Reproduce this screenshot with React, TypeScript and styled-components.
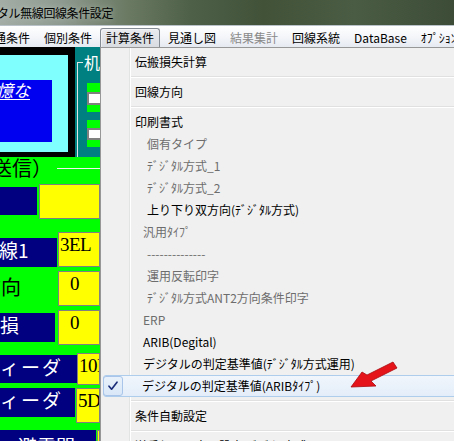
import React from "react";
import styled, { createGlobalStyle } from "styled-components";

const JP = `"Noto Sans CJK JP", "Noto Sans", sans-serif`;
const MIN = `"Liberation Serif", "Noto Sans CJK JP", serif`;

const GlobalStyle = createGlobalStyle`
  html, body { margin: 0; padding: 0; width: 454px; height: 441px; overflow: hidden; background: #f0f0f0; }
  #root { width: 454px; height: 441px; }
`;

const Window = styled.div`
  position: relative;
  width: 454px;
  height: 441px;
  overflow: hidden;
  display: flex;
  flex-direction: column;
  font-family: ${JP};
`;

const TitleBar = styled.div`
  height: 25px;
  flex: none;
  display: flex;
  align-items: center;
  background: linear-gradient(90deg, #a3ada6 0%, #8d998e 14%, #6a7a63 28%, #4f6049 42%, #415239 58%, #4b5c44 78%, #3c4c37 100%);
  border-bottom: 1px solid #b9c2c8;
`;

const TitleText = styled.span`
  font-size: 12px;
  color: #000;
  margin-left: -3px;
  letter-spacing: -0.4px;
  white-space: nowrap;
  text-shadow: 0 0 6px rgba(220, 230, 220, 0.6);
`;

const MenuBar = styled.div`
  height: 21px;
  flex: none;
  display: flex;
  background: linear-gradient(#ffffff, #f3f5f9 55%, #e6eaf1);
  box-sizing: border-box;
`;

const MenuBarItem = styled.div<{ $pressed?: boolean; $disabled?: boolean }>`
  margin: 2px 1px 0;
  height: 19px;
  box-sizing: border-box;
  padding: 0 5px;
  border: 1px solid ${(p) => (p.$pressed ? "#868c94" : "transparent")};
  border-bottom: none;
  border-radius: 3px 3px 0 0;
  background: ${(p) => (p.$pressed ? "linear-gradient(#e9ebee, #d9dce1)" : "transparent")};
  box-shadow: ${(p) => (p.$pressed ? "inset 1px 1px 0 rgba(255,255,255,0.5)" : "none")};
  font-size: 12px;
  line-height: 18px;
  white-space: nowrap;
  color: ${(p) => (p.$disabled ? "#8a8a8a" : "#000")};
  &:first-child {
    margin-left: -12px;
  }
`;

const Client = styled.div`
  flex: 1;
  display: flex;
  min-height: 0;
`;

const FormPanel = styled.div`
  width: 100px;
  flex: none;
  display: flex;
  flex-direction: column;
  background: #00ff00;
  overflow: hidden;
`;

const TopArea = styled.div`
  height: 110px;
  flex: none;
  display: flex;
`;

const BlackFrame = styled.div`
  width: 75px;
  flex: none;
  background: #000;
  padding: 8px 7px 5px 0;
  box-sizing: border-box;
  display: flex;
`;

const CyanPane = styled.div`
  flex: 1;
  background: #80ffff;
  padding: 25px 16px 10px 0;
  display: flex;
`;

const BlueBox = styled.div`
  flex: 1;
  background: #0000f0;
  overflow: hidden;
`;

const BlueCaption = styled.div`
  color: #fff;
  font-size: 17px;
  font-style: italic;
  text-decoration: underline;
  text-underline-offset: 2px;
  line-height: 20px;
  white-space: nowrap;
  text-indent: -4px;
`;

const TealPane = styled.div`
  flex: 1;
  background: #008080;
  padding: 15px 0 0 2px;
  display: flex;
  flex-direction: column;
`;

const GroupFrame = styled.div`
  flex: 1;
  border-left: 1px solid #e4e4e4;
  border-top: 1px solid #e4e4e4;
  display: flex;
  flex-direction: column;
`;

const GroupLegend = styled.span`
  align-self: flex-start;
  margin: -9px 0 0 5px;
  padding: 0 1px;
  background: #008080;
  color: #fff;
  font-size: 16px;
  line-height: 16px;
  white-space: nowrap;
`;

const CheckStrip = styled.div<{ $mt: number; $pt: number }>`
  margin: ${(p) => p.$mt}px 0 0 9px;
  padding: ${(p) => p.$pt}px 0 7px;
  background: #00ff00;
`;

const CheckSquare = styled.div<{ $h: number }>`
  width: 16px;
  height: ${(p) => p.$h}px;
  box-sizing: border-box;
  background: #fff;
  border: 2px solid #808080;
`;

const LowerArea = styled.div`
  flex: 1;
  display: flex;
  flex-direction: column;
`;

const SectionHead = styled.div`
  height: 22px;
  flex: none;
  display: flex;
  align-items: center;
`;

const SectionTitle = styled.span`
  font-size: 20px;
  line-height: 22px;
  margin-left: -8px;
  color: #000;
  white-space: nowrap;
`;

const SectionRule = styled.div`
  flex: 1;
  height: 1px;
  margin-left: 5px;
  margin-top: 1px;
  background: #f2f2f2;
`;

const FieldRow = styled.div<{ $mt: number }>`
  display: flex;
  align-items: flex-start;
  margin-top: ${(p) => p.$mt}px;
  flex: none;
`;

const NavyLabel = styled.div<{ $w: number; $h: number; $dy: number; $gap: number; $indent?: number; $ls?: number; $pt?: number }>`
  width: ${(p) => p.$w}px;
  height: ${(p) => p.$h}px;
  margin-top: ${(p) => p.$dy}px;
  margin-right: ${(p) => p.$gap}px;
  padding-top: ${(p) => p.$pt ?? 0}px;
  box-sizing: border-box;
  flex: none;
  background: #000080;
  color: #fff;
  font-size: 19px;
  line-height: 24px;
  letter-spacing: ${(p) => p.$ls ?? 0}px;
  text-indent: ${(p) => p.$indent ?? 0}px;
  white-space: nowrap;
  overflow: hidden;
`;

const PlainLabel = styled.div<{ $w: number; $indent: number }>`
  width: ${(p) => p.$w}px;
  flex: none;
  margin-top: 4px;
  color: #000;
  font-size: 20px;
  line-height: 24px;
  text-indent: ${(p) => p.$indent}px;
  white-space: nowrap;
  overflow: hidden;
`;

const YellowBox = styled.div<{ $h: number; $pl: number }>`
  flex: 1;
  height: ${(p) => p.$h}px;
  box-sizing: border-box;
  background: #ffff00;
  border: 1px solid #808080;
  padding: 1px 0 0 ${(p) => p.$pl}px;
  font-family: ${MIN};
  font-size: 19px;
  line-height: 21px;
  letter-spacing: -0.5px;
  color: #000;
  white-space: nowrap;
  overflow: hidden;
`;

const Backdrop = styled.div`
  flex: 1;
  background: #f0f0f0;
`;

const Dropdown = styled.div`
  position: absolute;
  left: 100px;
  top: 47px;
  width: 380px;
  height: 420px;
  box-sizing: border-box;
  padding: 3px 2px;
  border: 1px solid #979797;
  background-color: #f0f0f0;
  background-image: linear-gradient(
    to right,
    transparent 28px,
    #e2e3e3 28px,
    #e2e3e3 29px,
    #ffffff 29px,
    #ffffff 30px,
    transparent 30px
  );
  display: flex;
  flex-direction: column;
  z-index: 2;
  font-size: 12px;
`;

const Item = styled.div<{ $disabled?: boolean; $hl?: boolean }>`
  height: 22px;
  flex: none;
  box-sizing: border-box;
  display: flex;
  align-items: center;
  color: ${(p) => (p.$disabled ? "#6d6d6d" : "#000")};
  border: 1px solid ${(p) => (p.$hl ? "#aeccec" : "transparent")};
  border-radius: 3px;
  background: ${(p) => (p.$hl ? "linear-gradient(#f1f6fc, #e3edf9)" : "transparent")};
  white-space: nowrap;
`;

const CheckCell = styled.div`
  width: 20px;
  height: 20px;
  flex: none;
  margin-left: -1px;
  box-sizing: border-box;
  border: 1px solid #a9c6ea;
  border-radius: 3px;
  background: linear-gradient(#e8f1fb, #d9e7f7);
  display: flex;
  align-items: center;
  justify-content: center;
`;

const ItemText = styled.span<{ $indent: number }>`
  padding-left: ${(p) => p.$indent}px;
  line-height: 20px;
`;

const Separator = styled.div`
  height: 8px;
  flex: none;
  display: flex;
  align-items: center;
  padding-left: 28px;
  &::after {
    content: "";
    flex: 1;
    height: 0;
    border-top: 1px solid #e0e0e0;
    border-bottom: 1px solid #ffffff;
  }
`;

const ArrowMark = styled.svg`
  position: absolute;
  left: 340px;
  top: 355px;
  width: 65px;
  height: 40px;
  z-index: 3;
  overflow: visible;
`;

type Entry =
  | { sep: true }
  | { t: string; i: number; d?: boolean; checked?: boolean; hl?: boolean };

const entries: Entry[] = [
  { t: "伝搬損失計算", i: 31 },
  { sep: true },
  { t: "回線方向", i: 31 },
  { sep: true },
  { t: "印刷書式", i: 31 },
  { t: "個有タイプ", i: 43, d: true },
  { t: "ﾃﾞｼﾞﾀﾙ方式_1", i: 43, d: true },
  { t: "ﾃﾞｼﾞﾀﾙ方式_2", i: 43, d: true },
  { t: "上り下り双方向(ﾃﾞｼﾞﾀﾙ方式)", i: 43 },
  { t: "汎用ﾀｲﾌﾟ", i: 39, d: true },
  { t: "--------------", i: 43, d: true },
  { t: "運用反転印字", i: 43, d: true },
  { t: "ﾃﾞｼﾞﾀﾙ方式ANT2方向条件印字", i: 43, d: true },
  { t: "ERP", i: 39, d: true },
  { t: "ARIB(Degital)", i: 39 },
  { t: "デジタルの判定基準値(ﾃﾞｼﾞﾀﾙ方式運用)", i: 39 },
  { t: "デジタルの判定基準値(ARIBﾀｲﾌﾟ)", i: 39, checked: true, hl: true },
  { sep: true },
  { t: "条件自動設定", i: 31 },
  { sep: true },
  { t: "送受信ｱﾝﾃﾅ高の設定(ﾃﾞｼﾞﾀﾙ方式)", i: 31 },
];

const menuBarItems = [
  { t: "通条件" },
  { t: "個別条件" },
  { t: "計算条件", pressed: true },
  { t: "見通し図" },
  { t: "結果集計", disabled: true },
  { t: "回線系統" },
  { t: "DataBase" },
  { t: "ｵﾌﾟｼｮﾝ" },
];

export default function App() {
  return (
    <>
      <GlobalStyle />
      <Window>
        <TitleBar>
          <TitleText>タル無線回線条件設定</TitleText>
        </TitleBar>
        <MenuBar>
          {menuBarItems.map((m) => (
            <MenuBarItem key={m.t} $pressed={m.pressed} $disabled={m.disabled}>
              {m.t}
            </MenuBarItem>
          ))}
        </MenuBar>
        <Client>
          <FormPanel>
            <TopArea>
              <BlackFrame>
                <CyanPane>
                  <BlueBox>
                    <BlueCaption>憶な</BlueCaption>
                  </BlueBox>
                </CyanPane>
              </BlackFrame>
              <TealPane>
                <GroupFrame>
                  <GroupLegend>机能</GroupLegend>
                  <CheckStrip $mt={13} $pt={9}>
                    <CheckSquare $h={13} />
                  </CheckStrip>
                  <CheckStrip $mt={8} $pt={8}>
                    <CheckSquare $h={12} />
                  </CheckStrip>
                </GroupFrame>
              </TealPane>
            </TopArea>
            <LowerArea>
              <SectionHead>
                <SectionTitle>送信）</SectionTitle>
                <SectionRule />
              </SectionHead>
              <FieldRow $mt={5}>
                <NavyLabel $w={37} $h={28} $dy={3} $gap={2} />
                <YellowBox $h={35} $pl={0} />
              </FieldRow>
              <FieldRow $mt={13}>
                <NavyLabel $w={57} $h={29} $dy={6} $gap={1} $indent={-1}>
                  線1
                </NavyLabel>
                <YellowBox $h={35} $pl={1}>
                  3EL
                </YellowBox>
              </FieldRow>
              <FieldRow $mt={4}>
                <PlainLabel $w={58} $indent={-19}>
                  方向
                </PlainLabel>
                <YellowBox $h={35} $pl={11}>
                  0
                </YellowBox>
              </FieldRow>
              <FieldRow $mt={4}>
                <NavyLabel $w={55} $h={29} $dy={3} $gap={3}>
                  損
                </NavyLabel>
                <YellowBox $h={35} $pl={11}>
                  0
                </YellowBox>
              </FieldRow>
              <FieldRow $mt={8}>
                <NavyLabel $w={77} $h={28} $dy={2} $gap={0} $ls={2}>
                  ィーダ
                </NavyLabel>
                <YellowBox $h={32} $pl={1}>
                  10D-2V
                </YellowBox>
              </FieldRow>
              <FieldRow $mt={3}>
                <NavyLabel $w={75} $h={29} $dy={0} $gap={1} $ls={2}>
                  ィーダ
                </NavyLabel>
                <YellowBox $h={35} $pl={1}>
                  5D-2V
                </YellowBox>
              </FieldRow>
              <FieldRow $mt={7}>
                <NavyLabel $w={96} $h={30} $dy={0} $gap={1} $indent={18} $pt={4}>
                  避雷間
                </NavyLabel>
                <YellowBox $h={30} $pl={1} />
              </FieldRow>
            </LowerArea>
          </FormPanel>
          <Backdrop />
        </Client>

        <Dropdown>
          {entries.map((e, idx) =>
            "sep" in e ? (
              <Separator key={idx} />
            ) : (
              <Item key={idx} $disabled={e.d} $hl={e.hl}>
                {e.checked && (
                  <CheckCell>
                    <svg width="12" height="12" viewBox="0 0 12 12">
                      <path d="M2 6.2 L4.6 9.2 L10 2.2" fill="none" stroke="#1c2d7a" strokeWidth="1.7" strokeLinecap="round" strokeLinejoin="round" />
                    </svg>
                  </CheckCell>
                )}
                <ItemText $indent={e.checked ? e.i - 20 : e.i}>{e.t}</ItemText>
              </Item>
            )
          )}
        </Dropdown>

        <ArrowMark viewBox="340 355 65 40">
          <polygon
            points="351,387 362,372 367,375 393,362 397,368 371,381 376,386"
            fill="#e5141b"
            stroke="#a80a0e"
            strokeWidth="0.8"
            strokeLinejoin="round"
          />
        </ArrowMark>
      </Window>
    </>
  );
}
